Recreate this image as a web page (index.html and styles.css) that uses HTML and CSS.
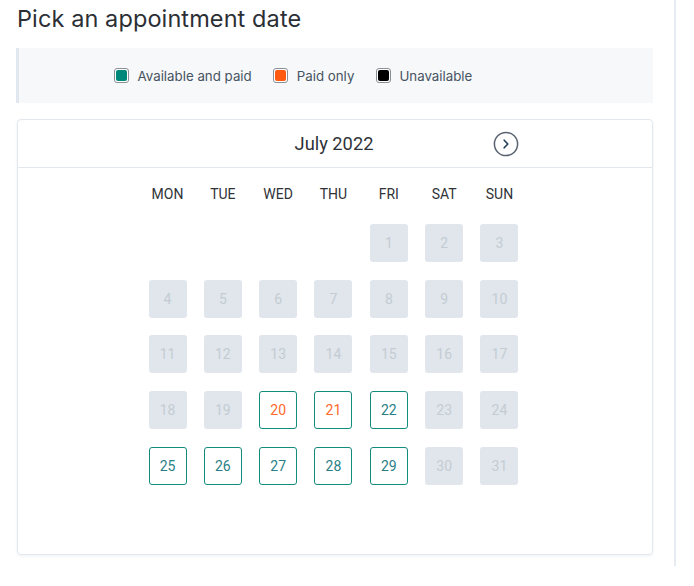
FILE: index.html
```html
<!DOCTYPE html>
<html>
<head>
<meta charset="utf-8">
<link rel="stylesheet" href="styles.css">
</head>
<body>
<div class="panel">
  <h1 class="title">Pick an appointment date</h1>
  <div class="legend">
    <div class="legend-item"><span class="swatch"><span class="fill teal"></span></span>Available and paid</div>
    <div class="legend-item"><span class="swatch"><span class="fill orange"></span></span>Paid only</div>
    <div class="legend-item"><span class="swatch"><span class="fill black"></span></span>Unavailable</div>
  </div>
  <div class="calendar">
    <div class="cal-head">
      <div class="cal-head-inner">
        <span class="nav-spacer"></span>
        <span class="month">July 2022</span>
        <span class="nav-btn">
          <svg width="26" height="26" viewBox="0 0 26 26"><circle cx="13" cy="13" r="11.6" fill="none" stroke="#5a6270" stroke-width="1.5"/><path d="M11.2 9.2 L14.8 13 L11.2 16.8" fill="none" stroke="#1f3c5a" stroke-width="1.6" stroke-linecap="round" stroke-linejoin="round"/></svg>
        </span>
      </div>
    </div>
    <div class="cal-body">
      <div class="weekdays">
        <span>MON</span><span>TUE</span><span>WED</span><span>THU</span><span>FRI</span><span>SAT</span><span>SUN</span>
      </div>
      <div class="days">
        <span class="empty"></span><span class="empty"></span><span class="empty"></span><span class="empty"></span>
        <span class="day off">1</span><span class="day off">2</span><span class="day off">3</span>
        <span class="day off">4</span><span class="day off">5</span><span class="day off">6</span><span class="day off">7</span><span class="day off">8</span><span class="day off">9</span><span class="day off">10</span>
        <span class="day off">11</span><span class="day off">12</span><span class="day off">13</span><span class="day off">14</span><span class="day off">15</span><span class="day off">16</span><span class="day off">17</span>
        <span class="day off">18</span><span class="day off">19</span><span class="day paid">20</span><span class="day paid">21</span><span class="day avail">22</span><span class="day off">23</span><span class="day off">24</span>
        <span class="day avail">25</span><span class="day avail">26</span><span class="day avail">27</span><span class="day avail">28</span><span class="day avail">29</span><span class="day off">30</span><span class="day off">31</span>
      </div>
    </div>
  </div>
</div>
</body>
</html>
```
FILE: styles.css
```css
html, body {
  margin: 0;
  padding: 0;
  background: #ffffff;
}
body {
  font-family: Inter, "Noto Sans", sans-serif;
  color: #2f3237;
}
.panel {
  width: 637px;
  height: 566px;
  padding-left: 16px;
  padding-right: 21px;
  border-right: 2px solid #e6eaf1;
  box-sizing: content-box;
}
.title {
  margin: 0;
  padding-top: 4px;
  height: 48px;
  box-sizing: border-box;
  font-size: 23.5px;
  font-weight: 400;
  line-height: 30px;
  color: #2b2f35;
  padding-left: 1px;
  letter-spacing: 0.1px;
}
.legend {
  height: 55px;
  background: #f6f8fa;
  border-left: 3px solid #e1e7ee;
  display: flex;
  align-items: center;
  padding-left: 95px;
  gap: 21.5px;
  font-size: 13.3px;
  color: #475361;
}
.legend-item {
  display: flex;
  align-items: center;
  gap: 8.5px;
}
.swatch {
  width: 15px;
  height: 15px;
  box-sizing: border-box;
  border: 1px solid #8a8f96;
  border-radius: 3px;
  padding: 1px;
  background: #fff;
  display: flex;
}
.fill {
  flex: 1;
  border-radius: 2px;
}
.teal { background: #00897b; }
.orange { background: #ff5a0f; }
.black { background: #000000; }
.calendar {
  margin-top: 16px;
  margin-left: 1px;
  height: 436px;
  box-sizing: border-box;
  border: 1px solid #e3e8ee;
  border-radius: 4px;
  box-shadow: 0 1px 3px rgba(30, 50, 80, 0.08);
  font-family: Roboto, "Liberation Sans", sans-serif;
}
.cal-head {
  height: 47px;
  border-bottom: 1px solid #e3e8ee;
  display: flex;
  justify-content: center;
  align-items: center;
  padding-right: 2px;
}
.cal-head-inner {
  width: 370px;
  display: flex;
  justify-content: space-between;
  align-items: center;
}
.nav-spacer {
  width: 26px;
}
.month {
  font-size: 18.3px;
  color: #2e3238;
}
.nav-btn {
  width: 26px;
  height: 26px;
  display: flex;
}
.cal-body {
  display: flex;
  flex-direction: column;
  align-items: center;
  padding-top: 18px;
  padding-right: 3px;
}
.weekdays {
  width: 370px;
  display: grid;
  grid-template-columns: repeat(7, 38px);
  justify-content: space-between;
  font-size: 14px;
  line-height: 17px;
  color: #2f3338;
  margin-bottom: 21px;
}
.weekdays span {
  text-align: center;
  white-space: nowrap;
  display: flex;
  justify-content: center;
}
.days {
  width: 370px;
  display: grid;
  grid-template-columns: repeat(7, 38px);
  grid-auto-rows: 38px;
  justify-content: space-between;
  row-gap: 17.7px;
}
.day {
  box-sizing: border-box;
  border-radius: 3px;
  display: flex;
  align-items: center;
  justify-content: center;
  font-size: 14px;
}
.off {
  background: #e0e6ec;
  color: #c4ccd3;
}
.avail {
  border: 1px solid #138b7d;
  color: #2a7f86;
}
.paid {
  border: 1px solid #138b7d;
  color: #ff6a2b;
}
```
